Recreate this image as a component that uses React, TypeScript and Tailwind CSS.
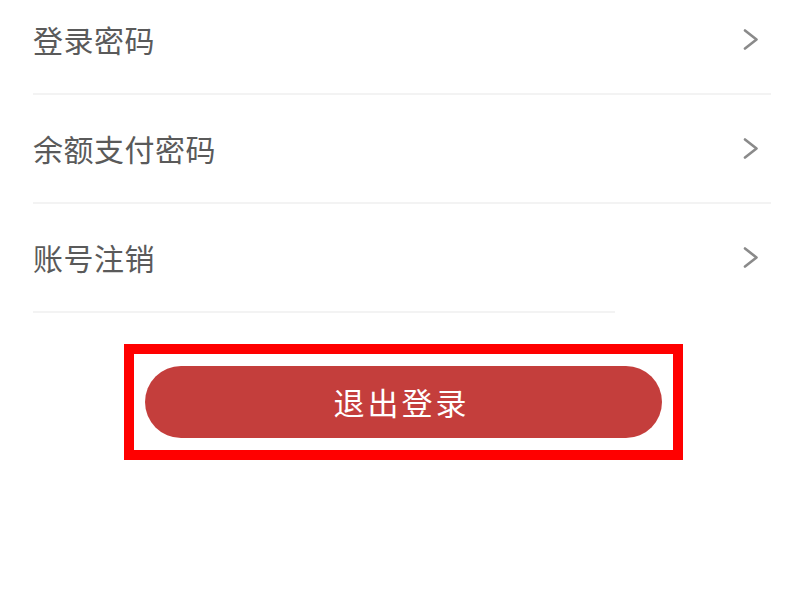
const items = ["登录密码", "余额支付密码", "账号注销"];

const Chevron = () => (
  <svg width="16" height="21" viewBox="0 0 16 21" fill="none" className="shrink-0">
    <path d="M2 1.5 L13.5 10.5 L2 19.5" stroke="#8a8a8a" strokeWidth="2.6" strokeLinecap="round" strokeLinejoin="round" />
  </svg>
);

const App = () => {
  return (
    <div
      className="w-[800px] h-[600px] bg-white overflow-hidden"
      style={{ fontFamily: '"Noto Sans CJK SC", "Noto Sans", sans-serif' }}
    >
      {/* Settings list */}
      <div className="-mt-[14px] pl-[33px] pr-[29px]">
        {items.map((label, i) => (
          <div key={label}>
            <div className="h-[107px] flex items-center justify-between pr-[12px]">
              <span className="text-[30px] text-[#5a5a5a] tracking-[0.5px]">{label}</span>
              <Chevron />
            </div>
            <div className={i === 2 ? "h-[2px] w-[582px] bg-[#f3f3f3]" : "h-[2px] w-full bg-[#f3f3f3]"} />
          </div>
        ))}
      </div>

      {/* Logout */}
      <div className="flex justify-center pl-[7px] mt-[31px]">
        <div className="border-[10px] border-[#ff0000] px-[11px] py-[12px]">
          <button className="w-[517px] h-[72px] rounded-full bg-[#c43e3c] text-white text-[31px] tracking-[3px] pr-[4px] flex items-center justify-center">
            退出登录
          </button>
        </div>
      </div>
    </div>
  );
};

export default App;
